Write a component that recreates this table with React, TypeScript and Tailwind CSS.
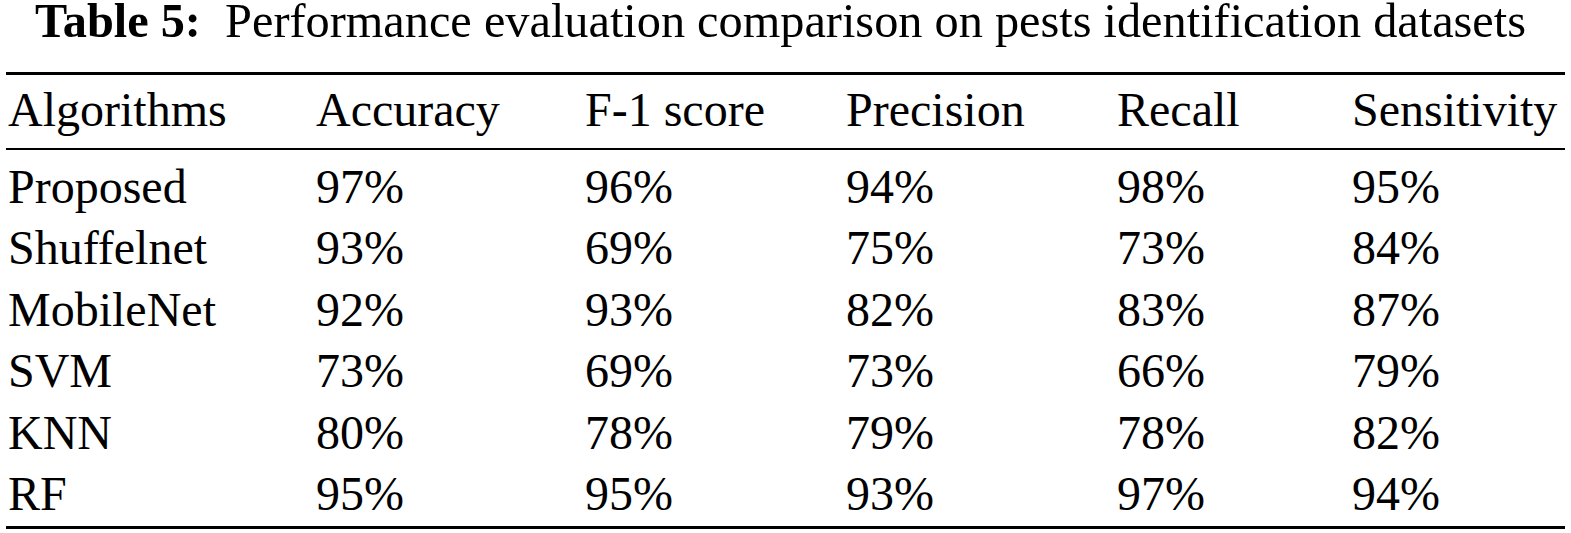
const columns = ['Algorithms', 'Accuracy', 'F-1 score', 'Precision', 'Recall', 'Sensitivity']

const rows = [
  ['Proposed', '97%', '96%', '94%', '98%', '95%'],
  ['Shuffelnet', '93%', '69%', '75%', '73%', '84%'],
  ['MobileNet', '92%', '93%', '82%', '83%', '87%'],
  ['SVM', '73%', '69%', '73%', '66%', '79%'],
  ['KNN', '80%', '78%', '79%', '78%', '82%'],
  ['RF', '95%', '95%', '93%', '97%', '94%'],
]

const gridCols = 'grid grid-cols-[308px_269px_261px_271px_235px_1fr] pl-[2px]'

const Rule = () => <div className="h-[2.5px] bg-black" />

const App = () => {
  return (
    <div className="w-[1571px] h-[533px] overflow-hidden bg-white text-black font-['Liberation_Serif','Times_New_Roman',serif]">
      <p className="text-center text-[48.3px] leading-[42px] whitespace-pre pr-[10px]">
        <span className="font-bold">Table 5:</span>  Performance evaluation comparison on pests identification datasets
      </p>

      <div className="mx-[6px] mt-[30px] text-[48px] leading-[61.4px]">
        <Rule />
        <div className={`${gridCols} pt-[4px] pb-[7.6px]`}>
          {columns.map((c) => (
            <div key={c}>{c}</div>
          ))}
        </div>
        <Rule />
        <div className="pt-[6px] pb-[2px]">
          {rows.map((r) => (
            <div key={r[0]} className={gridCols}>
              {r.map((cell, i) => (
                <div key={i}>{cell}</div>
              ))}
            </div>
          ))}
        </div>
        <Rule />
      </div>
    </div>
  )
}

export default App
